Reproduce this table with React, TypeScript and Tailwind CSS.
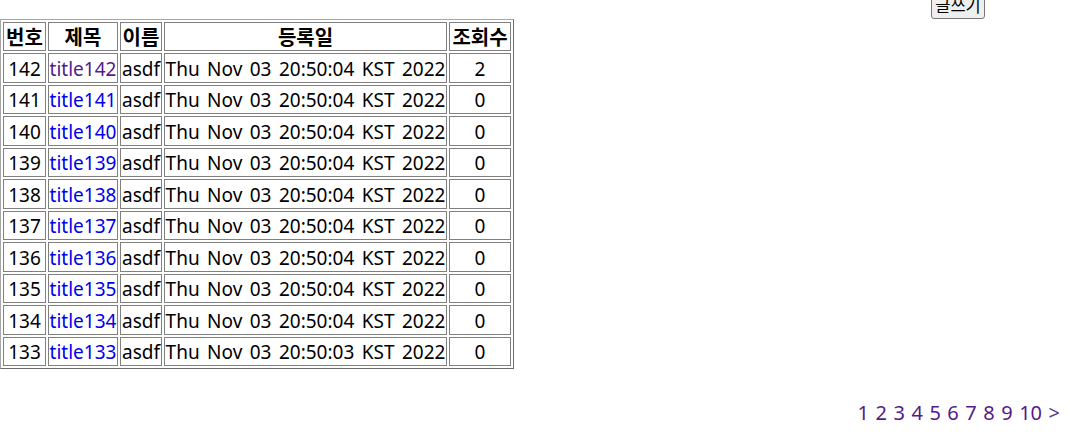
import React from 'react';

type Post = { no: number; title: string; visited?: boolean; date: string; views: number };

const posts: Post[] = [
  { no: 142, title: 'title142', visited: true, date: 'Thu Nov 03 20:50:04 KST 2022', views: 2 },
  { no: 141, title: 'title141', date: 'Thu Nov 03 20:50:04 KST 2022', views: 0 },
  { no: 140, title: 'title140', date: 'Thu Nov 03 20:50:04 KST 2022', views: 0 },
  { no: 139, title: 'title139', date: 'Thu Nov 03 20:50:04 KST 2022', views: 0 },
  { no: 138, title: 'title138', date: 'Thu Nov 03 20:50:04 KST 2022', views: 0 },
  { no: 137, title: 'title137', date: 'Thu Nov 03 20:50:04 KST 2022', views: 0 },
  { no: 136, title: 'title136', date: 'Thu Nov 03 20:50:04 KST 2022', views: 0 },
  { no: 135, title: 'title135', date: 'Thu Nov 03 20:50:04 KST 2022', views: 0 },
  { no: 134, title: 'title134', date: 'Thu Nov 03 20:50:04 KST 2022', views: 0 },
  { no: 133, title: 'title133', date: 'Thu Nov 03 20:50:03 KST 2022', views: 0 },
];

const font = "font-['Noto_Sans','Noto_Sans_CJK_KR',sans-serif]";

const Th = ({ className = '', ...props }: React.ComponentProps<'th'>) => (
  <th
    className={`border border-[#808080] p-0 text-center font-bold whitespace-nowrap text-[20px] font-['Noto_Sans_CJK_KR',sans-serif] ${className}`}
    {...props}
  />
);

const Td = ({ className = '', ...props }: React.ComponentProps<'td'>) => (
  <td
    className={`border border-[#808080] p-0 pt-[3px] text-center whitespace-nowrap ${className}`}
    {...props}
  />
);

export default function App() {
  return (
    <div className={`${font} text-black bg-white min-h-[438px] overflow-hidden`}>
      <div className="flex justify-end pr-[85px]">
        <button className="-mt-[9px] h-[28px] w-[54px] px-0 text-[16.5px] leading-none bg-[#efefef] border border-[#767676] rounded-[3px] font-['Noto_Sans_CJK_KR',sans-serif]">
          글쓰기
        </button>
      </div>

      <table className="table-fixed w-[514px] border-separate border-spacing-[2px] border border-t-[#a6a6a6] border-l-[#a6a6a6] border-r-[#6b6b6b] border-b-[#6b6b6b] text-[19px] leading-none">
        <thead>
          <tr className="h-[29px]">
            <Th className="w-[43px]">번호</Th>
            <Th className="w-[70px]">제목</Th>
            <Th className="w-[42px]">이름</Th>
            <Th className="w-[283px]">등록일</Th>
            <Th className="w-[62px]">조회수</Th>
          </tr>
        </thead>
        <tbody>
          {posts.map((p) => (
            <tr key={p.no} className="h-[29.5px]">
              <Td>{p.no}</Td>
              <Td>
                <a
                  href="#"
                  className={p.visited ? 'text-[#551a8b]' : 'text-[#0000ee]'}
                >
                  {p.title}
                </a>
              </Td>
              <Td>asdf</Td>
              <Td className="[word-spacing:2.5px]">{p.date}</Td>
              <Td>{p.views}</Td>
            </tr>
          ))}
        </tbody>
      </table>

      <div className="flex justify-end pr-[10px] mt-[30px] text-[20px] leading-[28px] text-[#551a8b]">
        <div className="flex gap-[6.5px]">
          {[1, 2, 3, 4, 5, 6, 7, 8, 9, 10].map((n) => (
            <a key={n} href="#">
              {n}
            </a>
          ))}
          <a href="#" className="text-[#5a3b86]">
            &gt;
          </a>
        </div>
      </div>
    </div>
  );
}
